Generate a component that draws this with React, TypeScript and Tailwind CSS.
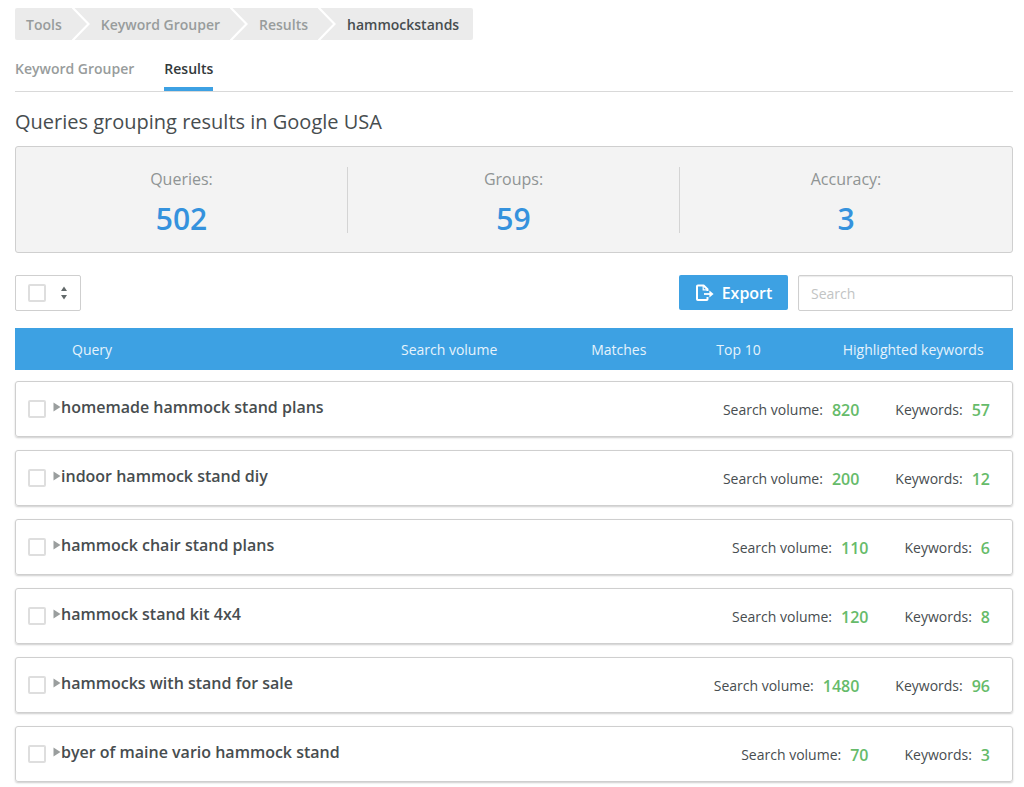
interface KeywordGroup {
    title: string;
    volume: number;
    keywords: number;
}

const groups: KeywordGroup[] = [
    { title: "homemade hammock stand plans", volume: 820, keywords: 57 },
    { title: "indoor hammock stand diy", volume: 200, keywords: 12 },
    { title: "hammock chair stand plans", volume: 110, keywords: 6 },
    { title: "hammock stand kit 4x4", volume: 120, keywords: 8 },
    { title: "hammocks with stand for sale", volume: 1480, keywords: 96 },
    { title: "byer of maine vario hammock stand", volume: 70, keywords: 3 },
];

const stats = [
    { label: "Queries:", value: 502 },
    { label: "Groups:", value: 59 },
    { label: "Accuracy:", value: 3 },
];

const crumbs = ["Tools", "Keyword Grouper", "Results"];

const checkboxClass =
    "block size-[18px] shrink-0 appearance-none rounded-xs border-2 border-[#dedede] bg-white checked:bg-[#3da1e3]";

const CrumbArrow = () => (
    <svg className="h-8 w-[18px] shrink-0" viewBox="0 0 18 32" fill="none" aria-hidden="true">
        <path d="M0 -1L16.5 16L0 33" stroke="#fff" strokeWidth="2.2" />
    </svg>
);

const ExportIcon = () => (
    <svg className="h-[18px] w-[19px] shrink-0" viewBox="0 0 19 18" fill="none" stroke="#fff" strokeWidth="2" aria-hidden="true">
        <path d="M12.5 13V15.2Q12.5 16 11.7 16H2.8Q2 16 2 15.2V2.3Q2 1.5 2.8 1.5H8.6L12.5 5.3V7" strokeLinejoin="round" />
        <path d="M8.2 1.5V5.8H12.5" strokeWidth="1.2" />
        <path d="M9 10H16.5" strokeWidth="1.8" />
        <path d="M14.4 6.6L18.6 10L14.4 13.4Z" fill="#fff" stroke="none" />
    </svg>
);

const GroupRow = ({ group }: { group: KeywordGroup }) => (
    <tr>
        <td colSpan={5} className="px-0 pt-[11px] pb-0.5">
            <div className="flex h-14 items-center rounded-[3px] border border-[#cfcfcf] pr-[22px] pl-3 shadow-[0_1px_2px_rgba(0,0,0,0.2)]">
                <input type="checkbox" aria-label={group.title} className={checkboxClass} />
                <button type="button" className="ml-[7px] flex items-center pb-1 text-base leading-6 font-semibold text-[#474d4f]">
                    <svg className="h-[10px] w-2" viewBox="0 0 8 10" aria-hidden="true">
                        <path d="M0.5 0.5L7.5 5L0.5 9.5Z" fill="#9a9e9e" />
                    </svg>
                    {group.title}
                </button>
                <dl className="ml-auto flex items-center gap-9 pt-0.5 text-sm leading-6 text-[#474d4f]">
                    <div className="flex items-center gap-[9px]">
                        <dt>Search volume:</dt>
                        <dd className="text-base leading-6 font-semibold text-[#66bb6a]">{group.volume}</dd>
                    </div>
                    <div className="flex items-center gap-[9px]">
                        <dt>Keywords:</dt>
                        <dd className="text-base leading-6 font-semibold text-[#66bb6a]">{group.keywords}</dd>
                    </div>
                </dl>
            </div>
        </td>
    </tr>
);

export default function App() {
    return (
        <main className="bg-white pt-2 pr-[11px] pb-1 pl-[15px] font-['Open_Sans',sans-serif] text-[#474d4f]">
            <nav aria-label="Breadcrumb" className="flex">
                <ol className="flex h-8 items-center overflow-hidden rounded-xs bg-[#ebebeb] px-[11px] text-sm font-semibold text-[#989c9c]">
                    {crumbs.map((crumb) => (
                        <li key={crumb} className="flex items-center">
                            <a href="#" className="mr-[10px] pt-0.5">{crumb}</a>
                            <CrumbArrow />
                            <span className="w-[11px]" />
                        </li>
                    ))}
                    <li className="pt-0.5 pr-[3px] text-[#474d4f]" aria-current="page">hammockstands</li>
                </ol>
            </nav>

            <nav aria-label="Sections" className="flex h-[52px] gap-[30px] border-b border-[#d9d9d9] text-sm font-semibold">
                <a href="#" className="pt-[19px] text-[#989c9c]">Keyword Grouper</a>
                <a href="#" className="border-b-4 border-[#3da1e3] pt-[19px] text-[#33393b]">Results</a>
            </nav>

            <h1 className="mt-[15px] text-xl leading-[30px]">Queries grouping results in Google USA</h1>

            <dl className="mt-[9px] grid h-[107px] grid-cols-3 items-center rounded-[3px] border border-[#cfcfcf] bg-[#f3f3f3] text-center">
                {stats.map((stat) => (
                    <div key={stat.label} className="h-[66px] border-r border-[#d4d4d4] last:border-r-0">
                        <dt className="text-base leading-6 text-[#8f9494]">{stat.label}</dt>
                        <dd className="mt-2 text-3xl leading-10 font-semibold text-[#3592dd]">{stat.value}</dd>
                    </div>
                ))}
            </dl>

            <div className="mt-[22px] flex h-9">
                <div className="flex w-[66px] items-center justify-between rounded-xs border border-[#cfcfcf] px-3">
                    <input type="checkbox" aria-label="Select all" className={checkboxClass} />
                    <button type="button" aria-label="Selection options">
                        <svg className="h-[14px] w-2" viewBox="0 0 8 14" fill="#62696a" aria-hidden="true">
                            <path d="M4 0.5L7 5H1Z" />
                            <path d="M4 13.5L7 9H1Z" />
                        </svg>
                    </button>
                </div>
                <button type="button" className="ml-auto flex h-[35px] w-[109px] items-center justify-center gap-2 rounded-xs bg-[#3da1e3] text-base font-semibold text-white">
                    <ExportIcon />
                    Export
                </button>
                <input
                    type="search"
                    aria-label="Search"
                    placeholder="Search"
                    className="ml-[10px] w-[215px] rounded-xs border border-[#cfcfcf] px-3 pt-0.5 text-sm shadow-[inset_0_1px_1px_rgba(0,0,0,0.08)] placeholder:text-[#c2c4c4]"
                />
            </div>

            <table className="mt-[17px] w-full table-fixed border-collapse">
                <thead>
                    <tr className="h-[42px] bg-[#3da1e3] text-sm text-[#e6f3fc]">
                        <th className="w-[31%] pt-0.5 pl-[57px] text-left font-normal">Query</th>
                        <th className="w-[25%] pt-0.5 font-normal">Search volume</th>
                        <th className="w-[9%] pt-0.5 font-normal">Matches</th>
                        <th className="w-[15%] pt-0.5 font-normal">Top 10</th>
                        <th className="w-[20%] pt-0.5 font-normal">Highlighted keywords</th>
                    </tr>
                </thead>
                <tbody>
                    {groups.map((group) => (
                        <GroupRow key={group.title} group={group} />
                    ))}
                </tbody>
            </table>
        </main>
    );
}
